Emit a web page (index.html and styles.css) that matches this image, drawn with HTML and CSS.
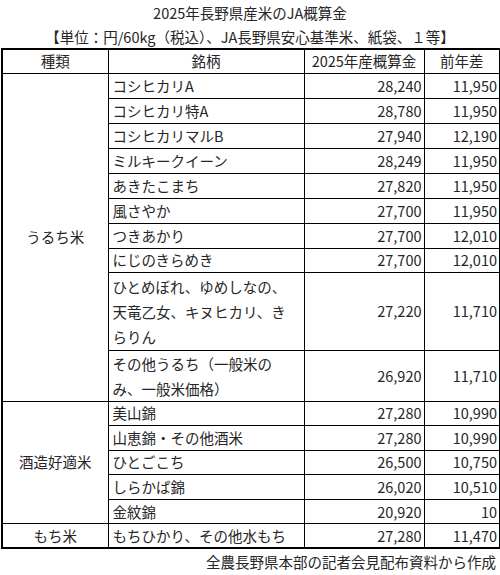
FILE: index.html
```html
<!DOCTYPE html>
<html lang="ja">
<head>
<meta charset="utf-8">
<title>2025年長野県産米のJA概算金</title>
<link rel="stylesheet" href="styles.css">
</head>
<body>
<div class="page">
  <div class="title">2025年長野県産米のJA概算金</div>
  <div class="subtitle">【単位：円/60kg（税込）、JA長野県安心基準米、紙袋、１等】</div>
  <table class="rice">
    <colgroup>
      <col class="c1"><col class="c2"><col class="c3"><col class="c4">
    </colgroup>
    <thead>
      <tr class="r-head">
        <th>種類</th><th>銘柄</th><th>2025年産概算金</th><th>前年差</th>
      </tr>
    </thead>
    <tbody>
      <tr class="r"><td class="kind" rowspan="10">うるち米</td><td class="name">コシヒカリA</td><td class="num">28,240</td><td class="num">11,950</td></tr>
      <tr class="r"><td class="name">コシヒカリ特A</td><td class="num">28,780</td><td class="num">11,950</td></tr>
      <tr class="r"><td class="name">コシヒカリマルB</td><td class="num">27,940</td><td class="num">12,190</td></tr>
      <tr class="r"><td class="name">ミルキークイーン</td><td class="num">28,249</td><td class="num">11,950</td></tr>
      <tr class="r"><td class="name">あきたこまち</td><td class="num">27,820</td><td class="num">11,950</td></tr>
      <tr class="r"><td class="name">風さやか</td><td class="num">27,700</td><td class="num">11,950</td></tr>
      <tr class="r"><td class="name">つきあかり</td><td class="num">27,700</td><td class="num">12,010</td></tr>
      <tr class="r r-short"><td class="name">にじのきらめき</td><td class="num">27,700</td><td class="num">12,010</td></tr>
      <tr class="r-three"><td class="name wrap">ひとめぼれ、ゆめしなの、<br>天竜乙女、キヌヒカリ、き<br>らりん</td><td class="num">27,220</td><td class="num">11,710</td></tr>
      <tr class="r-two"><td class="name wrap">その他うるち（一般米の<br>み、一般米価格）</td><td class="num">26,920</td><td class="num">11,710</td></tr>
      <tr class="r2"><td class="kind" rowspan="5">酒造好適米</td><td class="name">美山錦</td><td class="num">27,280</td><td class="num">10,990</td></tr>
      <tr class="r2"><td class="name">山恵錦・その他酒米</td><td class="num">27,280</td><td class="num">10,990</td></tr>
      <tr class="r2"><td class="name">ひとごこち</td><td class="num">26,500</td><td class="num">10,750</td></tr>
      <tr class="r2"><td class="name">しらかば錦</td><td class="num">26,020</td><td class="num">10,510</td></tr>
      <tr class="r2"><td class="name">金紋錦</td><td class="num">20,920</td><td class="num">10</td></tr>
      <tr class="r2 r-last"><td class="kind">もち米</td><td class="name">もちひかり、その他水もち</td><td class="num">27,280</td><td class="num">11,470</td></tr>
    </tbody>
  </table>
  <div class="source">全農長野県本部の記者会見配布資料から作成</div>
</div>
</body>
</html>
```

FILE: styles.css
```css
html, body {
  margin: 0;
  padding: 0;
  background: #ffffff;
}

.page {
  width: 500px;
  font-family: "Noto Sans CJK JP", "Noto Sans", sans-serif;
  font-size: 14.5px;
  color: #262626;
}

.title {
  height: 25px;
  line-height: 26px;
  text-align: center;
}

.subtitle {
  height: 23px;
  line-height: 23px;
  text-align: center;
}

.rice {
  margin-left: 1px;
  width: 498px;
  table-layout: fixed;
  border-collapse: collapse;
  border: 2px solid #000;
}

.c1 { width: 106px; }
.c2 { width: 196px; }
.c3 { width: 120px; }
.c4 { width: 76px; }

.rice th,
.rice td {
  border: 1px solid #000;
  padding: 0 3px;
  line-height: 22px;
  font-weight: normal;
  vertical-align: middle;
  white-space: nowrap;
  overflow: hidden;
}

.rice th {
  text-align: center;
  border-bottom-width: 1px;
}

.r-head { height: 24px; }
.r { height: 25px; }
.r-short { height: 24px; }
.r-three { height: 78px; }
.r-two { height: 51px; }
.r2 { height: 24.6px; }
.r-last { height: 24px; }

.rice .kind {
  text-align: center;
}

.rice .name {
  text-align: left;
  padding-left: 4px;
}

.rice .wrap {
  line-height: 25px;
}

.rice .num {
  text-align: right;
  padding-right: 2px;
}

.r-last td {
  border-bottom: 2px solid #000;
}

.source {
  height: 26px;
  line-height: 26px;
  text-align: right;
  padding-right: 4px;
}
```
